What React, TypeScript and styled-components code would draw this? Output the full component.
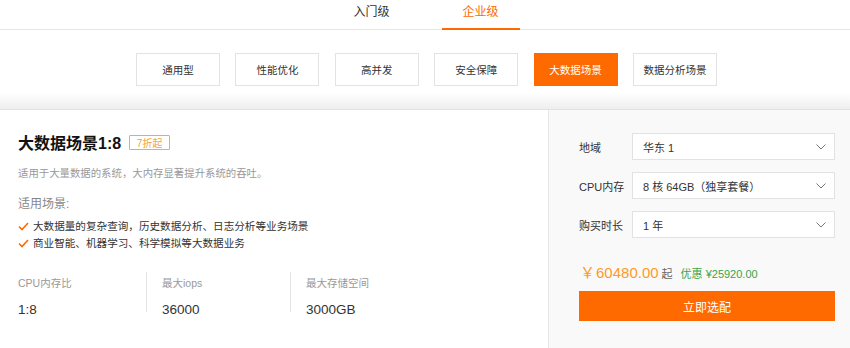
import { createGlobalStyle } from 'styled-components';
import styled from 'styled-components';

const GlobalStyle = createGlobalStyle`
	html, body {
		margin: 0;
		padding: 0;
		background: #fff;
		font-family: 'Liberation Sans', Arial, 'Noto Sans CJK SC', sans-serif;
		color: #333;
	}
	* {
		box-sizing: border-box;
	}
`;

const ORANGE = '#ff6a00';

const scenes = ['通用型', '性能优化', '高并发', '安全保障', '大数据场景', '数据分析场景'];

const uses = ['大数据量的复杂查询，历史数据分析、日志分析等业务场景', '商业智能、机器学习、科学模拟等大数据业务'];

const stats = [
	{ label: 'CPU内存比', value: '1:8' },
	{ label: '最大iops', value: '36000' },
	{ label: '最大存储空间', value: '3000GB' },
];

const options = [
	{ label: '地域', value: '华东 1' },
	{ label: 'CPU内存', value: '8 核 64GB（独享套餐）' },
	{ label: '购买时长', value: '1 年' },
];

const Chevron = () => (
	<svg width="10" height="6" viewBox="0 0 10 6" fill="none">
		<path d="M0.5 0.5 L5 5 L9.5 0.5" stroke="#777" strokeWidth="1" />
	</svg>
);

const Check = () => (
	<svg width="11" height="9" viewBox="0 0 11 9" fill="none">
		<path d="M1 4.5 L4 7.5 L10 1" stroke={ORANGE} strokeWidth="1.6" />
	</svg>
);

export default function App() {
	return (
		<>
			<GlobalStyle />
			<Page>
				<TabBar>
					<Tab>入门级</Tab>
					<Tab active>企业级</Tab>
				</TabBar>
				<FilterBar>
					{scenes.map((s) => (
						<SceneButton key={s} active={s === '大数据场景'}>
							{s}
						</SceneButton>
					))}
				</FilterBar>
				<Main>
					<Detail>
						<TitleRow>
							<Title>大数据场景1:8</Title>
							<Badge>7折起</Badge>
						</TitleRow>
						<Desc>适用于大量数据的系统，大内存显著提升系统的吞吐。</Desc>
						<SubHead>适用场景:</SubHead>
						<UseList>
							{uses.map((u) => (
								<UseItem key={u}>
									<Check />
									{u}
								</UseItem>
							))}
						</UseList>
						<Stats>
							{stats.map((s) => (
								<Stat key={s.label}>
									<StatLabel>{s.label}</StatLabel>
									<StatValue>{s.value}</StatValue>
								</Stat>
							))}
						</Stats>
					</Detail>
					<Config>
						{options.map((o) => (
							<OptionRow key={o.label}>
								<OptionLabel>{o.label}</OptionLabel>
								<Select>
									<span>{o.value}</span>
									<Chevron />
								</Select>
							</OptionRow>
						))}
						<PriceRow>
							<Price>
								<Yen>￥</Yen>60480.00
							</Price>
							<From>起</From>
							<Saving>优惠 ¥25920.00</Saving>
						</PriceRow>
						<BuyButton>立即选配</BuyButton>
					</Config>
				</Main>
			</Page>
		</>
	);
}

const Page = styled.div`
	width: 850px;
	height: 348px;
	display: flex;
	flex-direction: column;
	overflow: hidden;
`;

const TabBar = styled.div`
	height: 30px;
	display: flex;
	justify-content: center;
	gap: 31px;
	border-bottom: 1px solid #e6e6e6;
	padding-left: 2px;
`;

const Tab = styled.div<{ active?: boolean }>`
	width: 78px;
	height: 30px;
	line-height: 24px;
	text-align: center;
	font-size: 12px;
	color: ${(p) => (p.active ? ORANGE : '#333')};
	border-bottom: 2px solid ${(p) => (p.active ? ORANGE : 'transparent')};
	margin-bottom: -1px;
`;

const FilterBar = styled.div`
	height: 80px;
	display: flex;
	justify-content: center;
	align-items: flex-start;
	gap: 15.4px;
	padding-top: 23px;
	padding-left: 3px;
	background: linear-gradient(to bottom, #fff 0, #fff 63px, #eeeeee 79px);
	border-bottom: 1px solid #e2e2e2;
`;

const SceneButton = styled.div<{ active?: boolean }>`
	width: 84px;
	height: 33px;
	display: flex;
	align-items: center;
	justify-content: center;
	font-size: 10.5px;
	color: ${(p) => (p.active ? '#fff' : '#333')};
	background: ${(p) => (p.active ? ORANGE : '#fff')};
	border: 1px solid ${(p) => (p.active ? ORANGE : '#e3e3e3')};
`;

const Main = styled.div`
	flex: 1;
	display: flex;
`;

const Detail = styled.div`
	width: 548px;
	padding: 22px 18px 0;
	background: #fff;
`;

const TitleRow = styled.div`
	display: flex;
	align-items: center;
	gap: 8px;
	height: 20px;
`;

const Title = styled.h2`
	margin: 0;
	font-size: 16px;
	font-weight: bold;
	color: #111;
`;

const Badge = styled.span`
	width: 41px;
	height: 15px;
	display: flex;
	align-items: center;
	justify-content: center;
	font-size: 10px;
	color: #f5a33b;
	border: 1px solid #f7a94a;
	border-radius: 1px;
`;

const Desc = styled.p`
	margin: 14px 0 0;
	font-size: 10.4px;
	line-height: 16px;
	color: #999;
`;

const SubHead = styled.div`
	margin-top: 14px;
	font-size: 12px;
	line-height: 16px;
	color: #888;
`;

const UseList = styled.ul`
	margin: 6px 0 0;
	padding: 0;
	list-style: none;
`;

const UseItem = styled.li`
	display: flex;
	align-items: center;
	gap: 4px;
	font-size: 10.6px;
	line-height: 17px;
	color: #333;
`;

const Stats = styled.div`
	display: flex;
	margin-top: 20px;
`;

const Stat = styled.div`
	width: 144px;
	height: 40px;
	padding-left: 15px;
	border-left: 1px solid #e4e4e4;

	&:first-child {
		width: 128px;
		padding-left: 0;
		border-left: none;
	}
`;

const StatLabel = styled.div`
	margin-top: 3px;
	font-size: 10.5px;
	line-height: 16px;
	color: #999;
`;

const StatValue = styled.div`
	margin-top: 10px;
	font-size: 13.5px;
	line-height: 18px;
	color: #333;
`;

const Config = styled.div`
	flex: 1;
	padding: 23px 15px 0 30px;
	background: #f9f9f9;
	border-left: 1px solid #e6e6e6;
	display: flex;
	flex-direction: column;
`;

const OptionRow = styled.div`
	display: flex;
	align-items: center;
	height: 27px;
	margin-bottom: 12px;
`;

const OptionLabel = styled.div`
	width: 53px;
	font-size: 11px;
	color: #333;
	white-space: nowrap;
`;

const Select = styled.div`
	flex: 1;
	height: 27px;
	display: flex;
	align-items: center;
	justify-content: space-between;
	padding: 0 8px 0 10px;
	background: #fff;
	border: 1px solid #e2e2e2;
	font-size: 11px;
	color: #333;
`;

const PriceRow = styled.div`
	display: flex;
	align-items: baseline;
	margin-top: 11px;
	height: 20px;
`;

const Price = styled.span`
	font-size: 15px;
	color: #ff9a1f;
	margin-left: 1px;
`;

const Yen = styled.span`
	font-size: 15px;
	font-family: 'Noto Sans CJK SC', sans-serif;
	margin-right: 1px;
`;

const From = styled.span`
	margin-left: 3px;
	font-size: 11px;
	color: #666;
`;

const Saving = styled.span`
	margin-left: 8px;
	font-size: 11px;
	color: #3aa34a;
`;

const BuyButton = styled.button`
	margin-top: 10px;
	height: 30px;
	width: 100%;
	border: none;
	background: ${ORANGE};
	color: #fff;
	font-family: inherit;
	font-size: 12px;
	cursor: pointer;
`;
